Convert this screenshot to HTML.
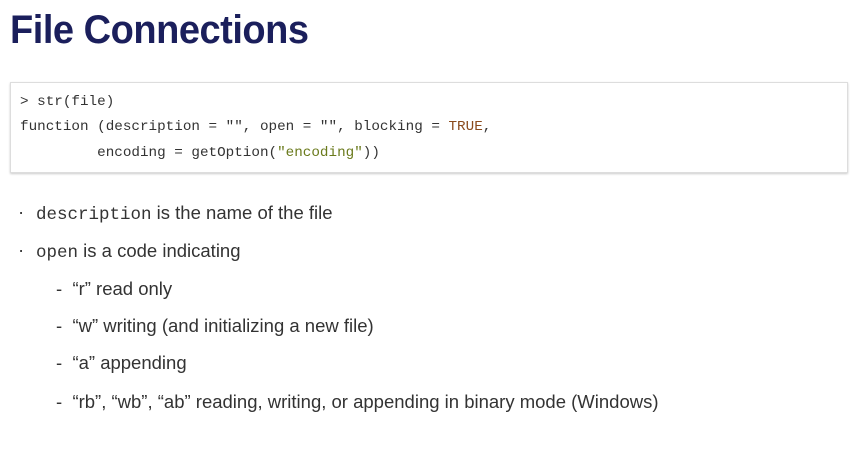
<!DOCTYPE html>
<html><head><style>
body{margin:0;width:852px;height:452px;background:#fff;position:relative;overflow:hidden;font-family:"Liberation Sans",sans-serif;color:#333}
.t{position:absolute;left:10px;top:8px;font-size:40px;font-weight:bold;color:#1b1f5c;transform:scaleX(0.95);transform-origin:left;letter-spacing:-0.5px}
.box{position:absolute;left:10px;top:82px;width:836px;height:89px;border:1px solid #ddd;box-shadow:0 1px 2px #ccc}
.c{position:absolute;left:20px;font-family:"Liberation Mono",monospace;font-size:14px;color:#333;white-space:pre;transform:scaleX(1.02);transform-origin:left}
.l{position:absolute;font-size:18.5px;white-space:nowrap;color:#333}
.m{font-family:"Liberation Mono",monospace;font-size:17.5px}
</style></head><body>
<div class="t">File Connections</div>
<div class="box"></div>
<div class="c" style="top:94px">&gt; str(file)</div>
<div class="c" style="top:119px">function (description = "", open = "", blocking = <span style="color:#8a4a1c">TRUE</span>,</div>
<div class="c" style="top:145px">         encoding = getOption(<span style="color:#6a7a1c">"encoding"</span>))</div>
<div class="l" style="left:18px;top:201px">·</div>
<div class="l" style="left:36px;top:202px"><span class="m">description</span> is the name of the file</div>
<div class="l" style="left:18px;top:239px">·</div>
<div class="l" style="left:36px;top:240px"><span class="m">open</span> is a code indicating</div>
<div class="l" style="left:56px;top:278px">-&nbsp; “r” read only</div>
<div class="l" style="left:56px;top:315px">-&nbsp; “w” writing (and initializing a new file)</div>
<div class="l" style="left:56px;top:352px">-&nbsp; “a” appending</div>
<div class="l" style="left:56px;top:391px">-&nbsp; “rb”, “wb”, “ab” reading, writing, or appending in binary mode (Windows)</div>
</body></html>
